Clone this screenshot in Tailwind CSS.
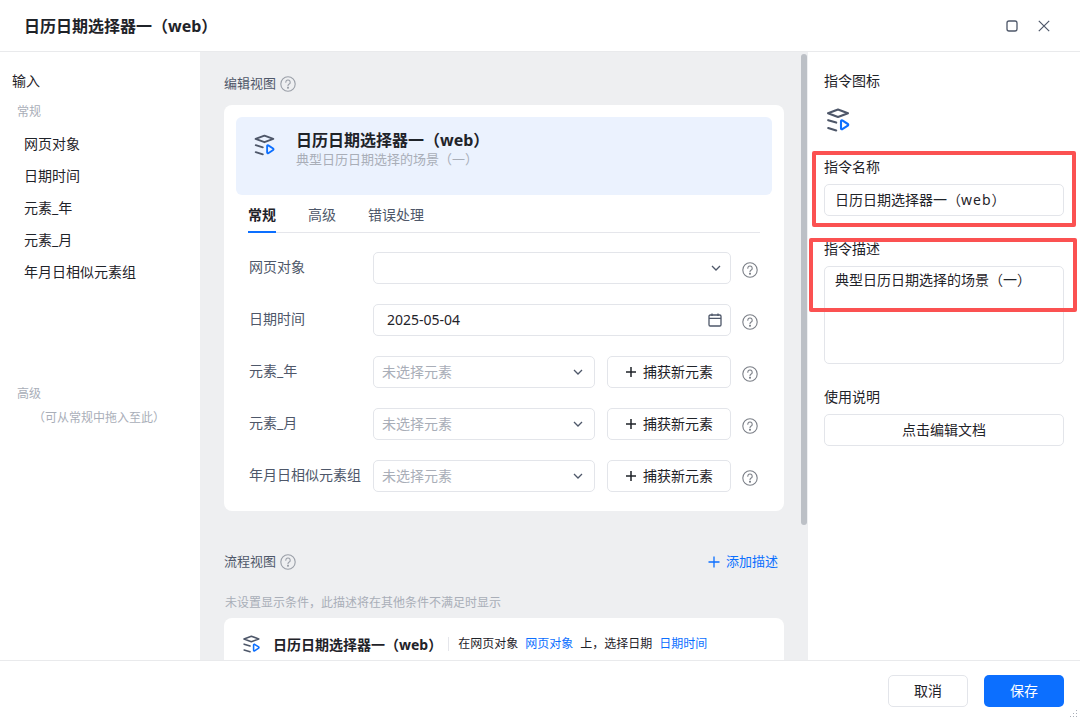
<!DOCTYPE html>
<html>
<head>
    <meta charset="UTF-8" />
    <title>日历日期选择器一（web）</title>
    <script src="https://cdn.jsdelivr.net/npm/@tailwindcss/browser@4"></script>
</head>
<body class="relative h-[720px] w-[1080px] overflow-hidden bg-white font-['Noto_Sans','Noto_Sans_CJK_SC',sans-serif] text-[14px] text-[#1f2329]">

    <!-- header -->
    <header class="flex h-[52px] items-center justify-between border-b border-[#e9eaec] pl-6 pr-[28px]">
        <h1 class="text-[16px] font-bold">日历日期选择器一（web）</h1>
        <div class="flex items-center gap-[16px]">
            <svg class="h-4 w-4" viewBox="0 0 16 16" fill="none" stroke="#4e5769" stroke-width="1.3"><rect x="3" y="3" width="10" height="10" rx="2"/></svg>
            <svg class="h-4 w-4" viewBox="0 0 16 16" fill="none" stroke="#4e5769" stroke-width="1.2"><path d="M2.8 2.8l10.4 10.4M13.2 2.8L2.8 13.2"/></svg>
        </div>
    </header>

    <div class="flex h-[608px]">
        <!-- left -->
        <aside class="w-[200px] shrink-0 pt-[19px]">
            <div class="pl-3 leading-5">输入</div>
            <div class="mt-[11px] pl-[17px] text-[12px] leading-5 text-[#a9aeb8]">常规</div>
            <ul class="mt-[6px] pl-6">
                <li class="h-8 leading-8">网页对象</li>
                <li class="h-8 leading-8">日期时间</li>
                <li class="h-8 leading-8">元素_年</li>
                <li class="h-8 leading-8">元素_月</li>
                <li class="h-8 leading-8">年月日相似元素组</li>
            </ul>
            <div class="mt-[96px] pl-[17px] text-[12px] leading-5 text-[#a9aeb8]">高级</div>
            <div class="mt-1 pl-[33px] text-[12px] leading-5 text-[#a9aeb8]">（可从常规中拖入至此）</div>
        </aside>

        <!-- middle -->
        <main class="relative w-[608px] shrink-0 overflow-hidden bg-[#eeeff1] pl-6 pr-6 pt-[22px]">
            <div class="flex h-5 items-center gap-1 text-[13px] text-[#4e5769]">
                <span>编辑视图</span>
                <svg class="h-4 w-4" viewBox="0 0 16 16" fill="none" stroke="#9a9fa8" stroke-width="1.1"><circle cx="8" cy="8" r="7.2"/><path d="M5.8 6.2a2.2 2.2 0 1 1 3.4 1.9c-.8.4-1.2.9-1.2 1.7" stroke-linecap="round"/><circle cx="8" cy="11.8" r=".5" fill="#9a9fa8"/></svg>
            </div>

            <section class="mt-[11px] h-[406px] rounded-lg bg-white p-3">
                <div class="flex h-[78px] rounded-[6px] bg-[#ebf2fe] pl-4 pt-[13px]">
                    <svg class="mt-[3px] h-6 w-6" viewBox="0 0 27 24" fill="none">
                        <path d="M14 1.5l10 3.7-10 3.7-10-3.7z" stroke="#4e5769" stroke-width="2.1" stroke-linejoin="round"/>
                        <path d="M4.2 12.2l8 2.4M4.2 20l8 2.5" stroke="#4e5769" stroke-width="2.1" stroke-linecap="round"/>
                        <path d="M17 13.2c0-.7.7-1.1 1.3-.8l5.5 3.6c.6.4.6 1.2 0 1.6l-5.5 3.6c-.6.3-1.3-.1-1.3-.8z" stroke="#0c6fff" stroke-width="2.1" stroke-linejoin="round"/>
                    </svg>
                    <div class="ml-5">
                        <div class="text-[16px] font-bold leading-[20px]">日历日期选择器一（web）</div>
                        <div class="text-[13px] leading-[18px] text-[#a9aeb8]">典型日历日期选择的场景（一）</div>
                    </div>
                </div>

                <div class="mx-3 mt-[10px] flex h-[28px] gap-8 border-b border-[#e5e6eb] leading-5">
                    <span class="h-[28px] border-b-2 border-[#0c6fff] font-bold">常规</span>
                    <span class="text-[#4e5769]">高级</span>
                    <span class="text-[#4e5769]">错误处理</span>
                </div>

                <div class="mt-[19px] flex flex-col gap-5 pl-[13px]">
                    <div class="flex h-8 items-center">
                        <label class="mb-1 w-[124px] shrink-0 text-[#4e5769]">网页对象</label>
                        <div class="flex h-8 w-[358px] items-center justify-end rounded-[5px] border border-[#e3e5ea] pr-2">
                            <svg class="h-3 w-3" viewBox="0 0 12 12" fill="none" stroke="#4e5769" stroke-width="1.3"><path d="M2 4l4 4 4-4"/></svg>
                        </div>
                        <svg class="ml-[11px] mt-[3px] h-4 w-4" viewBox="0 0 16 16" fill="none" stroke="#7b7f87" stroke-width="1.1"><circle cx="8" cy="8" r="7.2"/><path d="M5.8 6.2a2.2 2.2 0 1 1 3.4 1.9c-.8.4-1.2.9-1.2 1.7" stroke-linecap="round"/><circle cx="8" cy="11.8" r=".5" fill="#7b7f87"/></svg>
                    </div>
                    <div class="flex h-8 items-center">
                        <label class="mb-1 w-[124px] shrink-0 text-[#4e5769]">日期时间</label>
                        <div class="flex h-8 w-[358px] items-center justify-between rounded-[5px] border border-[#e3e5ea] pl-[13px] pr-[8px]">
                            <span class="pb-[2px]">2025-05-04</span>
                            <svg class="h-[14px] w-[14px]" viewBox="0 0 14 14" fill="none" stroke="#4e5769" stroke-width="1.3"><rect x="1" y="2" width="12" height="11" rx="1.2"/><path d="M1 5.3h12M4 .5v2.6M10 .5v2.6"/></svg>
                        </div>
                        <svg class="ml-[11px] mt-[3px] h-4 w-4" viewBox="0 0 16 16" fill="none" stroke="#7b7f87" stroke-width="1.1"><circle cx="8" cy="8" r="7.2"/><path d="M5.8 6.2a2.2 2.2 0 1 1 3.4 1.9c-.8.4-1.2.9-1.2 1.7" stroke-linecap="round"/><circle cx="8" cy="11.8" r=".5" fill="#7b7f87"/></svg>
                    </div>
                    <div class="flex h-8 items-center">
                        <label class="mb-1 w-[124px] shrink-0 text-[#4e5769]">元素_年</label>
                        <div class="flex h-8 w-[222px] items-center justify-between rounded-[5px] border border-[#e3e5ea] pl-2 pr-[10px] text-[#a9aeb8]">
                            <span class="pb-[2px]">未选择元素</span>
                            <svg class="h-3 w-3" viewBox="0 0 12 12" fill="none" stroke="#4e5769" stroke-width="1.3"><path d="M2 4l4 4 4-4"/></svg>
                        </div>
                        <button class="ml-3 flex h-8 w-[124px] items-center justify-center gap-[6px] rounded-[5px] border border-[#e3e5ea]">
                            <svg class="h-3 w-3" viewBox="0 0 12 12" stroke="#1f2329" stroke-width="1.5"><path d="M6 1v10M1 6h10"/></svg><span class="pb-[2px]">捕获新元素</span>
                        </button>
                        <svg class="ml-[11px] mt-[3px] h-4 w-4" viewBox="0 0 16 16" fill="none" stroke="#7b7f87" stroke-width="1.1"><circle cx="8" cy="8" r="7.2"/><path d="M5.8 6.2a2.2 2.2 0 1 1 3.4 1.9c-.8.4-1.2.9-1.2 1.7" stroke-linecap="round"/><circle cx="8" cy="11.8" r=".5" fill="#7b7f87"/></svg>
                    </div>
                    <div class="flex h-8 items-center">
                        <label class="mb-1 w-[124px] shrink-0 text-[#4e5769]">元素_月</label>
                        <div class="flex h-8 w-[222px] items-center justify-between rounded-[5px] border border-[#e3e5ea] pl-2 pr-[10px] text-[#a9aeb8]">
                            <span class="pb-[2px]">未选择元素</span>
                            <svg class="h-3 w-3" viewBox="0 0 12 12" fill="none" stroke="#4e5769" stroke-width="1.3"><path d="M2 4l4 4 4-4"/></svg>
                        </div>
                        <button class="ml-3 flex h-8 w-[124px] items-center justify-center gap-[6px] rounded-[5px] border border-[#e3e5ea]">
                            <svg class="h-3 w-3" viewBox="0 0 12 12" stroke="#1f2329" stroke-width="1.5"><path d="M6 1v10M1 6h10"/></svg><span class="pb-[2px]">捕获新元素</span>
                        </button>
                        <svg class="ml-[11px] mt-[3px] h-4 w-4" viewBox="0 0 16 16" fill="none" stroke="#7b7f87" stroke-width="1.1"><circle cx="8" cy="8" r="7.2"/><path d="M5.8 6.2a2.2 2.2 0 1 1 3.4 1.9c-.8.4-1.2.9-1.2 1.7" stroke-linecap="round"/><circle cx="8" cy="11.8" r=".5" fill="#7b7f87"/></svg>
                    </div>
                    <div class="flex h-8 items-center">
                        <label class="mb-1 w-[124px] shrink-0 whitespace-nowrap text-[#4e5769]">年月日相似元素组</label>
                        <div class="flex h-8 w-[222px] items-center justify-between rounded-[5px] border border-[#e3e5ea] pl-2 pr-[10px] text-[#a9aeb8]">
                            <span class="pb-[2px]">未选择元素</span>
                            <svg class="h-3 w-3" viewBox="0 0 12 12" fill="none" stroke="#4e5769" stroke-width="1.3"><path d="M2 4l4 4 4-4"/></svg>
                        </div>
                        <button class="ml-3 flex h-8 w-[124px] items-center justify-center gap-[6px] rounded-[5px] border border-[#e3e5ea]">
                            <svg class="h-3 w-3" viewBox="0 0 12 12" stroke="#1f2329" stroke-width="1.5"><path d="M6 1v10M1 6h10"/></svg><span class="pb-[2px]">捕获新元素</span>
                        </button>
                        <svg class="ml-[11px] mt-[3px] h-4 w-4" viewBox="0 0 16 16" fill="none" stroke="#7b7f87" stroke-width="1.1"><circle cx="8" cy="8" r="7.2"/><path d="M5.8 6.2a2.2 2.2 0 1 1 3.4 1.9c-.8.4-1.2.9-1.2 1.7" stroke-linecap="round"/><circle cx="8" cy="11.8" r=".5" fill="#7b7f87"/></svg>
                    </div>
                </div>
            </section>

            <div class="mt-[41px] flex h-5 items-center justify-between pr-[6px]">
                <div class="flex items-center gap-1 text-[13px] text-[#4e5769]">
                    <span>流程视图</span>
                    <svg class="h-4 w-4" viewBox="0 0 16 16" fill="none" stroke="#9a9fa8" stroke-width="1.1"><circle cx="8" cy="8" r="7.2"/><path d="M5.8 6.2a2.2 2.2 0 1 1 3.4 1.9c-.8.4-1.2.9-1.2 1.7" stroke-linecap="round"/><circle cx="8" cy="11.8" r=".5" fill="#9a9fa8"/></svg>
                </div>
                <div class="flex items-center gap-[6px] text-[13px] text-[#0c6fff]">
                    <svg class="h-3 w-3" viewBox="0 0 12 12" stroke="#0c6fff" stroke-width="1.3"><path d="M6 .5v11M.5 6h11"/></svg>添加描述
                </div>
            </div>
            <div class="ml-px mt-[21px] text-[12px] leading-5 text-[#a9aeb8]">未设置显示条件，此描述将在其他条件不满足时显示</div>

            <section class="mt-[5px] h-[60px] rounded-t-lg bg-white pl-[17px] pt-4">
                <div class="flex h-5 items-center">
                    <svg class="h-5 w-5" viewBox="0 0 27 24" fill="none">
                        <path d="M14 1.5l10 3.7-10 3.7-10-3.7z" stroke="#4e5769" stroke-width="2.1" stroke-linejoin="round"/>
                        <path d="M4.2 12.2l8 2.4M4.2 20l8 2.5" stroke="#4e5769" stroke-width="2.1" stroke-linecap="round"/>
                        <path d="M17 13.2c0-.7.7-1.1 1.3-.8l5.5 3.6c.6.4.6 1.2 0 1.6l-5.5 3.6c-.6.3-1.3-.1-1.3-.8z" stroke="#0c6fff" stroke-width="2.1" stroke-linejoin="round"/>
                    </svg>
                    <span class="ml-3 text-[14px] font-bold">日历日期选择器一（web）</span>
                    <span class="ml-[6px] h-[14px] w-px bg-[#e5e6eb]"></span>
                    <span class="ml-[9px] text-[12px]">在网页对象</span>
                    <span class="ml-[7px] text-[12px] text-[#0c6fff]">网页对象</span>
                    <span class="ml-[7px] text-[12px]">上，选择日期</span>
                    <span class="ml-[7px] text-[12px] text-[#0c6fff]">日期时间</span>
                </div>
            </section>

            <!-- scrollbar -->
            <div class="absolute right-[1px] top-[2px] h-[471px] w-[6px] rounded-full bg-[#bcc0c6]"></div>
        </main>

        <!-- right -->
        <aside class="flex-1 px-4 pt-[19px]">
            <div class="leading-5">指令图标</div>
            <svg class="mt-[17px] h-6 w-[27px]" viewBox="0 0 27 24" fill="none">
                <path d="M14 1.5l10 3.7-10 3.7-10-3.7z" stroke="#4e5769" stroke-width="2.1" stroke-linejoin="round"/>
                <path d="M4.2 12.2l8 2.4M4.2 20l8 2.5" stroke="#4e5769" stroke-width="2.1" stroke-linecap="round"/>
                <path d="M17 13.2c0-.7.7-1.1 1.3-.8l5.5 3.6c.6.4.6 1.2 0 1.6l-5.5 3.6c-.6.3-1.3-.1-1.3-.8z" stroke="#0c6fff" stroke-width="2.1" stroke-linejoin="round"/>
            </svg>
            <div class="mt-[25px] leading-5">指令名称</div>
            <div class="mt-[7px] flex h-8 items-center rounded-[5px] border border-[#e3e5ea] pl-[10px]"><span class="pb-[2px]">日历日期选择器一（<span class="tracking-[1px]">web</span>）</span></div>
            <div class="mt-[23px] leading-5">指令描述</div>
            <div class="mt-[7px] h-[98px] rounded-[5px] border border-[#e3e5ea] pl-[10px] pt-[3px] leading-5">典型日历日期选择的场景（一）</div>
            <div class="mt-[23px] leading-5">使用说明</div>
            <button class="mt-[7px] h-8 w-full rounded-[5px] border border-[#e3e5ea] pb-[2px]">点击编辑文档</button>
        </aside>
    </div>

    <!-- footer -->
    <footer class="flex h-[60px] items-start justify-end gap-4 border-t border-[#e9eaec] pr-4 pt-[14px]">
        <button class="h-8 w-20 rounded-[5px] border border-[#e3e5ea] pb-[2px]">取消</button>
        <button class="h-8 w-20 rounded-[5px] bg-[#0c6fff] pb-[2px] text-white">保存</button>
    </footer>

    <!-- resize grip -->
    <svg class="absolute bottom-[2px] right-[2px] h-2 w-2" viewBox="0 0 8 8" fill="#a9aeb8"><rect x="6" y="0" width="1" height="1"/><rect x="3" y="3" width="1" height="1"/><rect x="6" y="3" width="1" height="1"/><rect x="0" y="6" width="1" height="1"/><rect x="3" y="6" width="1" height="1"/><rect x="6" y="6" width="1" height="1"/></svg>

    <!-- red annotation boxes -->
    <div class="absolute left-[812px] top-[151px] h-[76px] w-[264px] rounded-[2px] border-[4px] border-[#fb5151]"></div>
    <div class="absolute left-[809px] top-[238px] h-[74px] w-[268px] rounded-[2px] border-[4px] border-[#fb5151]"></div>
</body>
</html>
